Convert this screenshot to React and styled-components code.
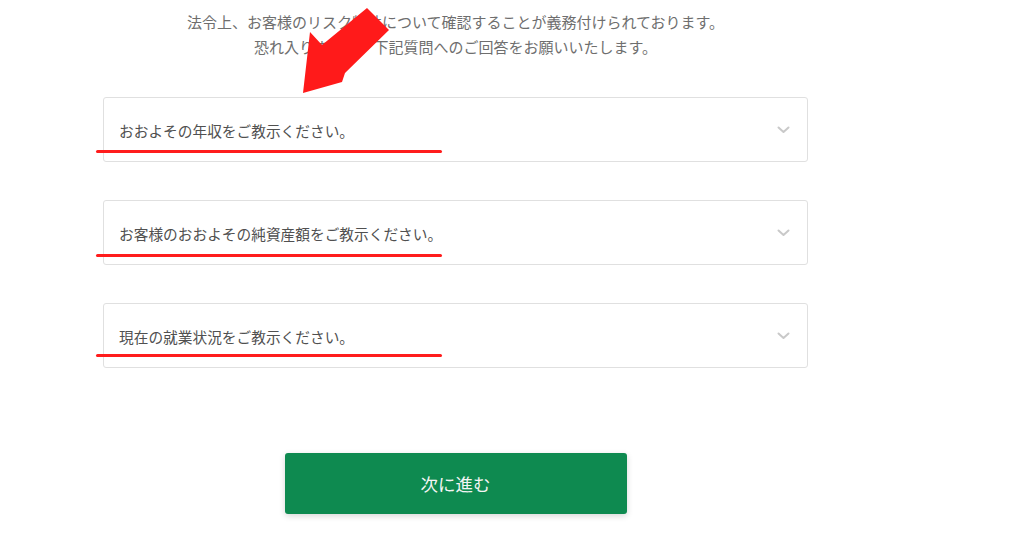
import React from "react";
import styled, { createGlobalStyle } from "styled-components";

const Global = createGlobalStyle`
  html, body { margin: 0; padding: 0; background: #ffffff; }
  body { font-family: "Noto Sans CJK JP", "Noto Sans", sans-serif; }
  * { box-sizing: border-box; }
`;

const Page = styled.div`
  position: relative;
  width: 1024px;
  height: 538px;
  overflow: hidden;
  padding-top: 9px;
`;

const Column = styled.div`
  width: 705px;
  margin-left: 103px;
  display: flex;
  flex-direction: column;
  align-items: stretch;
`;

const Intro = styled.p`
  margin: 0;
  text-align: center;
  font-size: 15px;
  line-height: 25px;
  color: #6e6e6e;
`;

const Fields = styled.div`
  display: flex;
  flex-direction: column;
  gap: 38px;
  margin-top: 38px;
`;

const SelectBox = styled.div`
  position: relative;
  height: 65px;
  border: 1px solid #e0e0e0;
  border-radius: 3px;
  background: #fff;
  display: flex;
  align-items: center;
  justify-content: space-between;
  padding: 1px 17px 0 15px;
`;

const Label = styled.span`
  font-size: 14.7px;
  color: #505050;
`;

const Chevron = styled.svg`
  width: 13px;
  height: 8px;
  flex: none;
`;

const Underline = styled.div`
  position: absolute;
  left: -8px;
  top: ${(p) => p.$top}px;
  width: 346px;
  height: 3px;
  border-radius: 2px;
  background: #ff1c1c;
`;

const ButtonRow = styled.div`
  display: flex;
  justify-content: center;
  margin-top: 85px;
`;

const NextButton = styled.button`
  width: 342px;
  height: 61px;
  border: none;
  border-radius: 3px;
  background: #0e8a50;
  color: #f4f4f4;
  font-family: "Noto Sans CJK JP", "Noto Sans", sans-serif;
  font-size: 17.5px;
  box-shadow: 0 2px 6px rgba(0, 0, 0, 0.16);
  cursor: pointer;
`;

const Arrow = styled.svg`
  position: absolute;
  left: 0;
  top: 0;
  width: 1024px;
  height: 538px;
  pointer-events: none;
`;

const fields = [
  { label: "おおよその年収をご教示ください。", line: 52 },
  { label: "お客様のおおよその純資産額をご教示ください。", line: 53 },
  { label: "現在の就業状況をご教示ください。", line: 50 },
];

export default function App() {
  return (
    <>
      <Global />
      <Page>
        <Column>
          <Intro>
            法令上、お客様のリスク特性について確認することが義務付けられております。
            <br />
            恐れ入りますが、下記質問へのご回答をお願いいたします。
          </Intro>
          <Fields>
            {fields.map((f) => (
              <SelectBox key={f.label}>
                <Label>{f.label}</Label>
                <Chevron viewBox="0 0 13 8">
                  <path d="M1.5 1.5 L6.5 6 L11.5 1.5" fill="none" stroke="#c9c9c9" strokeWidth="2" strokeLinecap="round" strokeLinejoin="round" />
                </Chevron>
                <Underline $top={f.line} />
              </SelectBox>
            ))}
          </Fields>
          <ButtonRow>
            <NextButton>次に進む</NextButton>
          </ButtonRow>
        </Column>
        <Arrow viewBox="0 0 1024 538">
          <polygon
            points="303,93 310,32 322,45 367,8 389,30 345,73 342,82"
            fill="#ff1a1a"
          />
        </Arrow>
      </Page>
    </>
  );
}
